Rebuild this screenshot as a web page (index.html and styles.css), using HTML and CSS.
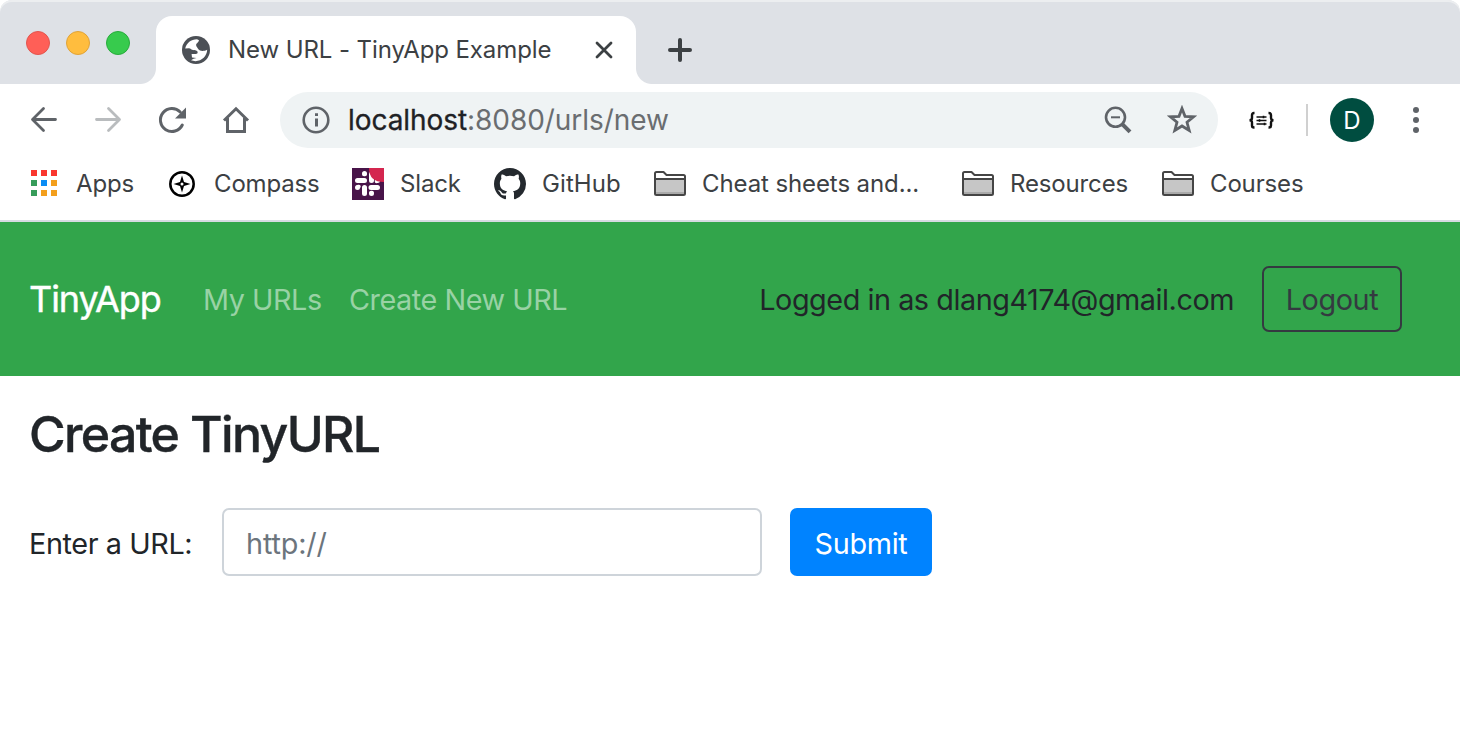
FILE: index.html
```html
<!DOCTYPE html>
<html lang="en">
<head>
<meta charset="utf-8">
<title>New URL - TinyApp Example</title>
<link rel="stylesheet" href="styles.css">
</head>
<body>
<div class="window">
  <div class="tabstrip">
    <div class="lights"><i class="light red"></i><i class="light amber"></i><i class="light green"></i></div>
    <div class="tab">
      <svg class="globe" width="28" height="28" viewBox="0 0 28 28"><circle cx="14" cy="14" r="14" fill="#4c5056"/><path fill="#fff" d="M3.200 12.500C4.500 7 9 3.300 15 3.200L17 4.200C16.500 5.800 15.500 7 14.200 8V10C15.300 11 15.800 13.500 18 14.500 20 15.400 23 15 25.200 13.800 25 20 20 25 13.500 25.200L9 24.200 11.500 22.800 14.500 22 10 21.400 9.600 18H14C16 18 16.200 15.500 14.500 14.800 13 14 11.500 14.400 10 13.800 8.500 13 8.500 12.200 7 12.200Z"/></svg>
      <span class="tab-title">New URL - TinyApp Example</span>
      <svg class="close" width="18" height="18" viewBox="0 0 18 18"><path d="M2 2 16 16M16 2 2 16" stroke="#3c4043" stroke-width="2.8" stroke-linecap="round"/></svg>
    </div>
    <svg class="plus" width="24" height="24" viewBox="0 0 24 24"><path d="M12 2V22M2 12H22" stroke="#3c4043" stroke-width="4" stroke-linecap="round"/></svg>
  </div>

  <div class="toolbar">
    <div class="nav">
      <svg width="32" height="32" viewBox="0 0 32 32" fill="none" stroke="#5f6368" stroke-width="2.8" stroke-linecap="round" stroke-linejoin="round"><path d="M27.500 15.500H5M15.500 4.500 4.500 15.500 15.500 26.500"/></svg>
      <svg width="32" height="32" viewBox="0 0 32 32" fill="none" stroke="#b9bcbe" stroke-width="2.8" stroke-linecap="round" stroke-linejoin="round"><path d="M4.500 15.500H27M16.500 4.500 27.500 15.500 16.500 26.500"/></svg>
      <svg width="32" height="32" viewBox="0 0 32 32"><path d="M26.300 21A11.500 11.500 0 1 1 24.200 8" fill="none" stroke="#5f6368" stroke-width="3" stroke-linecap="round"/><path d="M30 3.500V14.500H19Z" fill="#5f6368"/></svg>
      <svg width="32" height="32" viewBox="0 0 32 32" fill="none" stroke="#5f6368" stroke-width="3"><path d="M4 16.500 16 4.800 28 16.500M7.500 14V27.500H24.500V14" stroke-linejoin="miter"/></svg>
    </div>
    <div class="omnibox">
      <svg class="info" width="28" height="28" viewBox="0 0 28 28"><circle cx="14" cy="14" r="12.300" fill="none" stroke="#5f6368" stroke-width="2.600"/><path d="M14.500 7.200V10M14.500 12.400V20.500" stroke="#5f6368" stroke-width="3"/></svg>
      <span class="address"><b>localhost</b>:8080/urls/new</span>
      <svg class="lens" width="28" height="28" viewBox="0 0 28 28" fill="none" stroke="#5f6368"><circle cx="11.500" cy="11.300" r="9.500" stroke-width="2.600"/><path d="M7 11.300H16" stroke-width="2"/><path d="M18.500 18.300 26 25.800" stroke-width="4"/></svg>
      <svg class="star" width="30" height="30" viewBox="0 0 30 30"><path d="M15 3.500 18 11.300 26.500 11.800 20 17.300 22.200 25.500 15 21 7.800 25.500 10 17.300 3.500 11.800 12 11.300Z" fill="none" stroke="#5f6368" stroke-width="2.800"/></svg>
    </div>
    <svg class="braces" width="28" height="20" viewBox="0 0 28 20" fill="none" stroke="#111" stroke-width="2.400"><path d="M6.500 3H6Q4 3 4 5V8Q4 10.300 1.500 10.300Q4 10.300 4 12.600V15.500Q4 17.500 6 17.500H6.500M20.500 3H21Q23 3 23 5V8Q23 10.300 25.500 10.300Q23 10.300 23 12.600V15.500Q23 17.500 21 17.500H20.500"/><path d="M8.500 7H18.500M8.500 10.500H18.500M8.500 14H18.500" stroke-width="1.500"/><path d="M15.500 5.800V8.200M11.500 9.300V11.700M16.500 12.800V15.200" stroke-width="1.600"/></svg>
    <i class="divider"></i>
    <span class="avatar">D</span>
    <span class="more"><i></i><i></i><i></i></span>
  </div>

  <div class="bookmarks">
    <div class="bm bm-apps"><svg width="32" height="32" viewBox="0 0 32 32"><path fill="#f9372f" d="M3 2h6v6H3zM13 2h6v6h-6zM23 2h6v6h-6z"/><path fill="#379c5a" d="M3 12h6v6H3zM3 22h6v6H3z"/><path fill="#0a8cf5" d="M13 12h6v6h-6z"/><path fill="#f39f1d" d="M23 12h6v6h-6zM13 22h6v6h-6zM23 22h6v6h-6z"/></svg><span>Apps</span></div>
    <div class="bm bm-compass"><svg width="32" height="32" viewBox="0 0 32 32"><circle cx="16" cy="16" r="11.700" fill="none" stroke="#000" stroke-width="2.500"/><path fill-rule="evenodd" d="M16 7.500 18 14 24.500 16 18 18 16 24.500 14 18 7.500 16 14 14ZM16 14.500A1.500 1.500 0 1 0 16 17.500 1.500 1.500 0 0 0 16 14.500Z"/></svg><span>Compass</span></div>
    <div class="bm bm-slack"><svg width="32" height="32" viewBox="0 0 32 32"><path fill="#481449" d="M0 0h32v32H0z"/><g fill="none" stroke="#fff" stroke-width="5" stroke-linecap="round"><path d="M5.500 12.500H12.500M12.500 5.500V5.600M19.500 6V12.500M19 19.500H25.500M25.500 12.500V12.600M12.500 19.500V25.500M5.500 19.500V19.600M19.500 25.500V25.600"/><path stroke-width="3.500" d="M12 6.500H13M24.500 13.500V12M6 18.500H7M19 24.500H20"/></g><path fill="#d4264f" d="M17 0H32V14Q17 14 17 0Z"/></svg><span>Slack</span></div>
    <div class="bm bm-github"><svg width="32" height="32" viewBox="0 0 16 16"><path fill="#24292e" d="M8 0C3.580 0 0 3.580 0 8c0 3.540 2.290 6.530 5.470 7.590.4.070.55-.17.55-.38 0-.19-.01-.82-.01-1.490-2.010.37-2.530-.49-2.690-.94-.09-.23-.48-.94-.82-1.130-.28-.15-.68-.52-.01-.53.63-.01 1.080.58 1.230.82.72 1.210 1.870.87 2.330.66.07-.52.28-.87.51-1.070-1.780-.2-3.640-.89-3.640-3.950 0-.87.31-1.590.82-2.150-.08-.2-.36-1.020.08-2.120 0 0 .67-.21 2.200.82.64-.18 1.320-.27 2-.27s1.360.09 2 .27c1.530-1.040 2.200-.82 2.200-.82.44 1.100.16 1.920.08 2.120.51.56.82 1.270.82 2.150 0 3.070-1.870 3.750-3.650 3.950.29.25.54.73.54 1.480 0 1.070-.01 1.930-.01 2.200 0 .21.15.46.55.38A8.013 8.013 0 0 0 16 8c0-4.420-3.580-8-8-8z"/></svg><span>GitHub</span></div>
    <div class="bm bm-cheat"><svg width="32" height="32" viewBox="0 0 32 32"><path fill="#c6c6c6" d="M1 12h30v15H1z"/><path fill="#aaa" d="M2 24h28v2H2z"/><path fill="none" stroke="#454545" stroke-width="2" stroke-linejoin="round" d="M1 26V5.500Q1 4 2.500 4H9.500L12.500 7H29.500Q31 7 31 8.500V25.500Q31 27 29.500 27H2.500Q1 27 1 25.500M1 11H31"/></svg><span>Cheat sheets and...</span></div>
    <div class="bm bm-resources"><svg width="32" height="32" viewBox="0 0 32 32"><path fill="#c6c6c6" d="M1 12h30v15H1z"/><path fill="#aaa" d="M2 24h28v2H2z"/><path fill="none" stroke="#454545" stroke-width="2" stroke-linejoin="round" d="M1 26V5.500Q1 4 2.500 4H9.500L12.500 7H29.500Q31 7 31 8.500V25.500Q31 27 29.500 27H2.500Q1 27 1 25.500M1 11H31"/></svg><span>Resources</span></div>
    <div class="bm bm-courses"><svg width="32" height="32" viewBox="0 0 32 32"><path fill="#c6c6c6" d="M1 12h30v15H1z"/><path fill="#aaa" d="M2 24h28v2H2z"/><path fill="none" stroke="#454545" stroke-width="2" stroke-linejoin="round" d="M1 26V5.500Q1 4 2.500 4H9.500L12.500 7H29.500Q31 7 31 8.500V25.500Q31 27 29.500 27H2.500Q1 27 1 25.500M1 11H31"/></svg><span>Courses</span></div>
  </div>

  <header class="navbar">
    <span class="brand">TinyApp</span>
    <span class="link link-urls">My URLs</span>
    <span class="link link-new">Create New URL</span>
    <span class="account">Logged in as dlang4174@gmail.com</span>
    <button class="logout">Logout</button>
  </header>

  <main class="content">
    <h3 class="heading">Create TinyURL</h3>
    <form class="form">
      <label class="label" for="url">Enter a URL:</label>
      <input class="field" id="url" placeholder="http://">
      <button class="submit" type="button">Submit</button>
    </form>
  </main>
</div>
</body>
</html>
```

FILE: styles.css
```css
* { box-sizing: border-box; }
body { margin: 0; background: #fff; font-family: Inter, "Liberation Sans", sans-serif; color: #212529; }
svg { display: block; flex: none; }
span, label, button { white-space: nowrap; }
.window { width: 1460px; height: 750px; overflow: hidden; }

.tabstrip { display: flex; height: 84px; padding: 16px 0 0 26px; background: #dee1e6; border-radius: 12px 12px 0 0; box-shadow: inset 0 2px 0 #eceef0; }
.lights { display: flex; gap: 16px; width: 130px; padding-top: 15px; }
.light { width: 24px; height: 24px; border-radius: 50%; border: 1px solid; }
.red { background: #ff5f57; border-color: #e2554e; }
.amber { background: #ffbd3e; border-color: #e0a338; }
.green { background: #37cb4d; border-color: #28ab3c; }
.tab { position: relative; display: flex; align-items: center; width: 480px; padding-left: 26px; background: #fff; border-radius: 16px 16px 0 0; }
.tab::before, .tab::after { content: ""; position: absolute; bottom: 0; width: 16px; height: 16px; }
.tab::before { left: -16px; background: radial-gradient(circle at 0 0, #dee1e6 15.5px, #fff 16.5px); }
.tab::after { right: -16px; background: radial-gradient(circle at 100% 0, #dee1e6 15.5px, #fff 16.5px); }
.tab-title { width: 348px; margin-left: 18px; padding-bottom: 2px; font-size: 24px; color: #3c4043; letter-spacing: -0.09px; }
.close { margin-left: 19px; }
.plus { margin: 22px 0 0 32px; }

.toolbar { display: flex; align-items: center; height: 72px; }
.nav { display: flex; gap: 32px; width: 280px; padding-left: 28px; }
.omnibox { display: flex; align-items: center; width: 938px; height: 56px; padding-left: 22px; border-radius: 28px; background: #eff3f4; }
.address { width: 754px; margin-left: 18px; font-size: 28px; letter-spacing: -0.06px; color: #6a6d70; }
.address b { font-weight: 400; color: #202124; -webkit-text-stroke: 0.3px #202124; }
.lens { margin-left: 2px; }
.star { margin-left: 35px; }
.braces { margin-left: 30px; }
.divider { width: 2px; height: 32px; margin-left: 30px; background: #d0d0d0; }
.avatar { width: 44px; height: 44px; margin-left: 22px; border-radius: 50%; background: #004d40; color: #fff; font-size: 24px; line-height: 45px; text-align: center; }
.more { display: grid; gap: 4px; margin-left: 39px; }
.more i { width: 6px; height: 6px; border-radius: 50%; background: #5f6368; }

.bookmarks { display: flex; height: 66px; padding: 12px 0 0 28px; border-bottom: 2px solid #d7dbe2; }
.bm { display: flex; gap: 16px; height: 32px; line-height: 32px; font-size: 24px; letter-spacing: -0.15px; color: #3c4043; }
.bm-apps { width: 138px; }
.bm-compass { width: 186px; }
.bm-slack { width: 142px; }
.bm-github { width: 160px; letter-spacing: 0.1px; }
.bm-cheat { width: 308px; letter-spacing: -0.1px; }
.bm-resources { width: 200px; }

.navbar { display: flex; align-items: center; height: 154px; padding: 0 58px 0 29px; background: #32a54b; font-size: 28.8px; letter-spacing: -0.46px; }
.brand { width: 174px; font-size: 36px; letter-spacing: -1.1px; color: #fff; -webkit-text-stroke: 0.4px #fff; }
.link { color: #99d2a5; }
.link-urls { width: 146px; }
.account { margin-left: auto; margin-right: 28px; }
.logout { width: 140px; height: 66px; padding: 0; border: 2px solid #343a40; border-radius: 7px; background: none; color: #343a40; font: inherit; letter-spacing: -0.4px; }

.content { padding: 28px 28px 0 29px; }
.heading { margin: 0 0 44px; font-size: 50px; line-height: 60px; font-weight: 500; letter-spacing: -1.65px; -webkit-text-stroke: 0.4px #212529; }
.form { display: flex; align-items: center; font-size: 28.8px; letter-spacing: -0.4px; }
.label { width: 193px; padding-top: 2px; }
.field { width: 540px; height: 68px; padding: 2px 22px 0; border: 2px solid #ced4da; border-radius: 7px; font: inherit; letter-spacing: -0.15px; }
.field::placeholder { color: #6c757d; opacity: 1; }
.submit { width: 142px; height: 68px; margin-left: 28px; padding: 2px 0 0; border: 0; border-radius: 7px; background: #0083ff; color: #fff; font: inherit; letter-spacing: -0.3px; }
```
